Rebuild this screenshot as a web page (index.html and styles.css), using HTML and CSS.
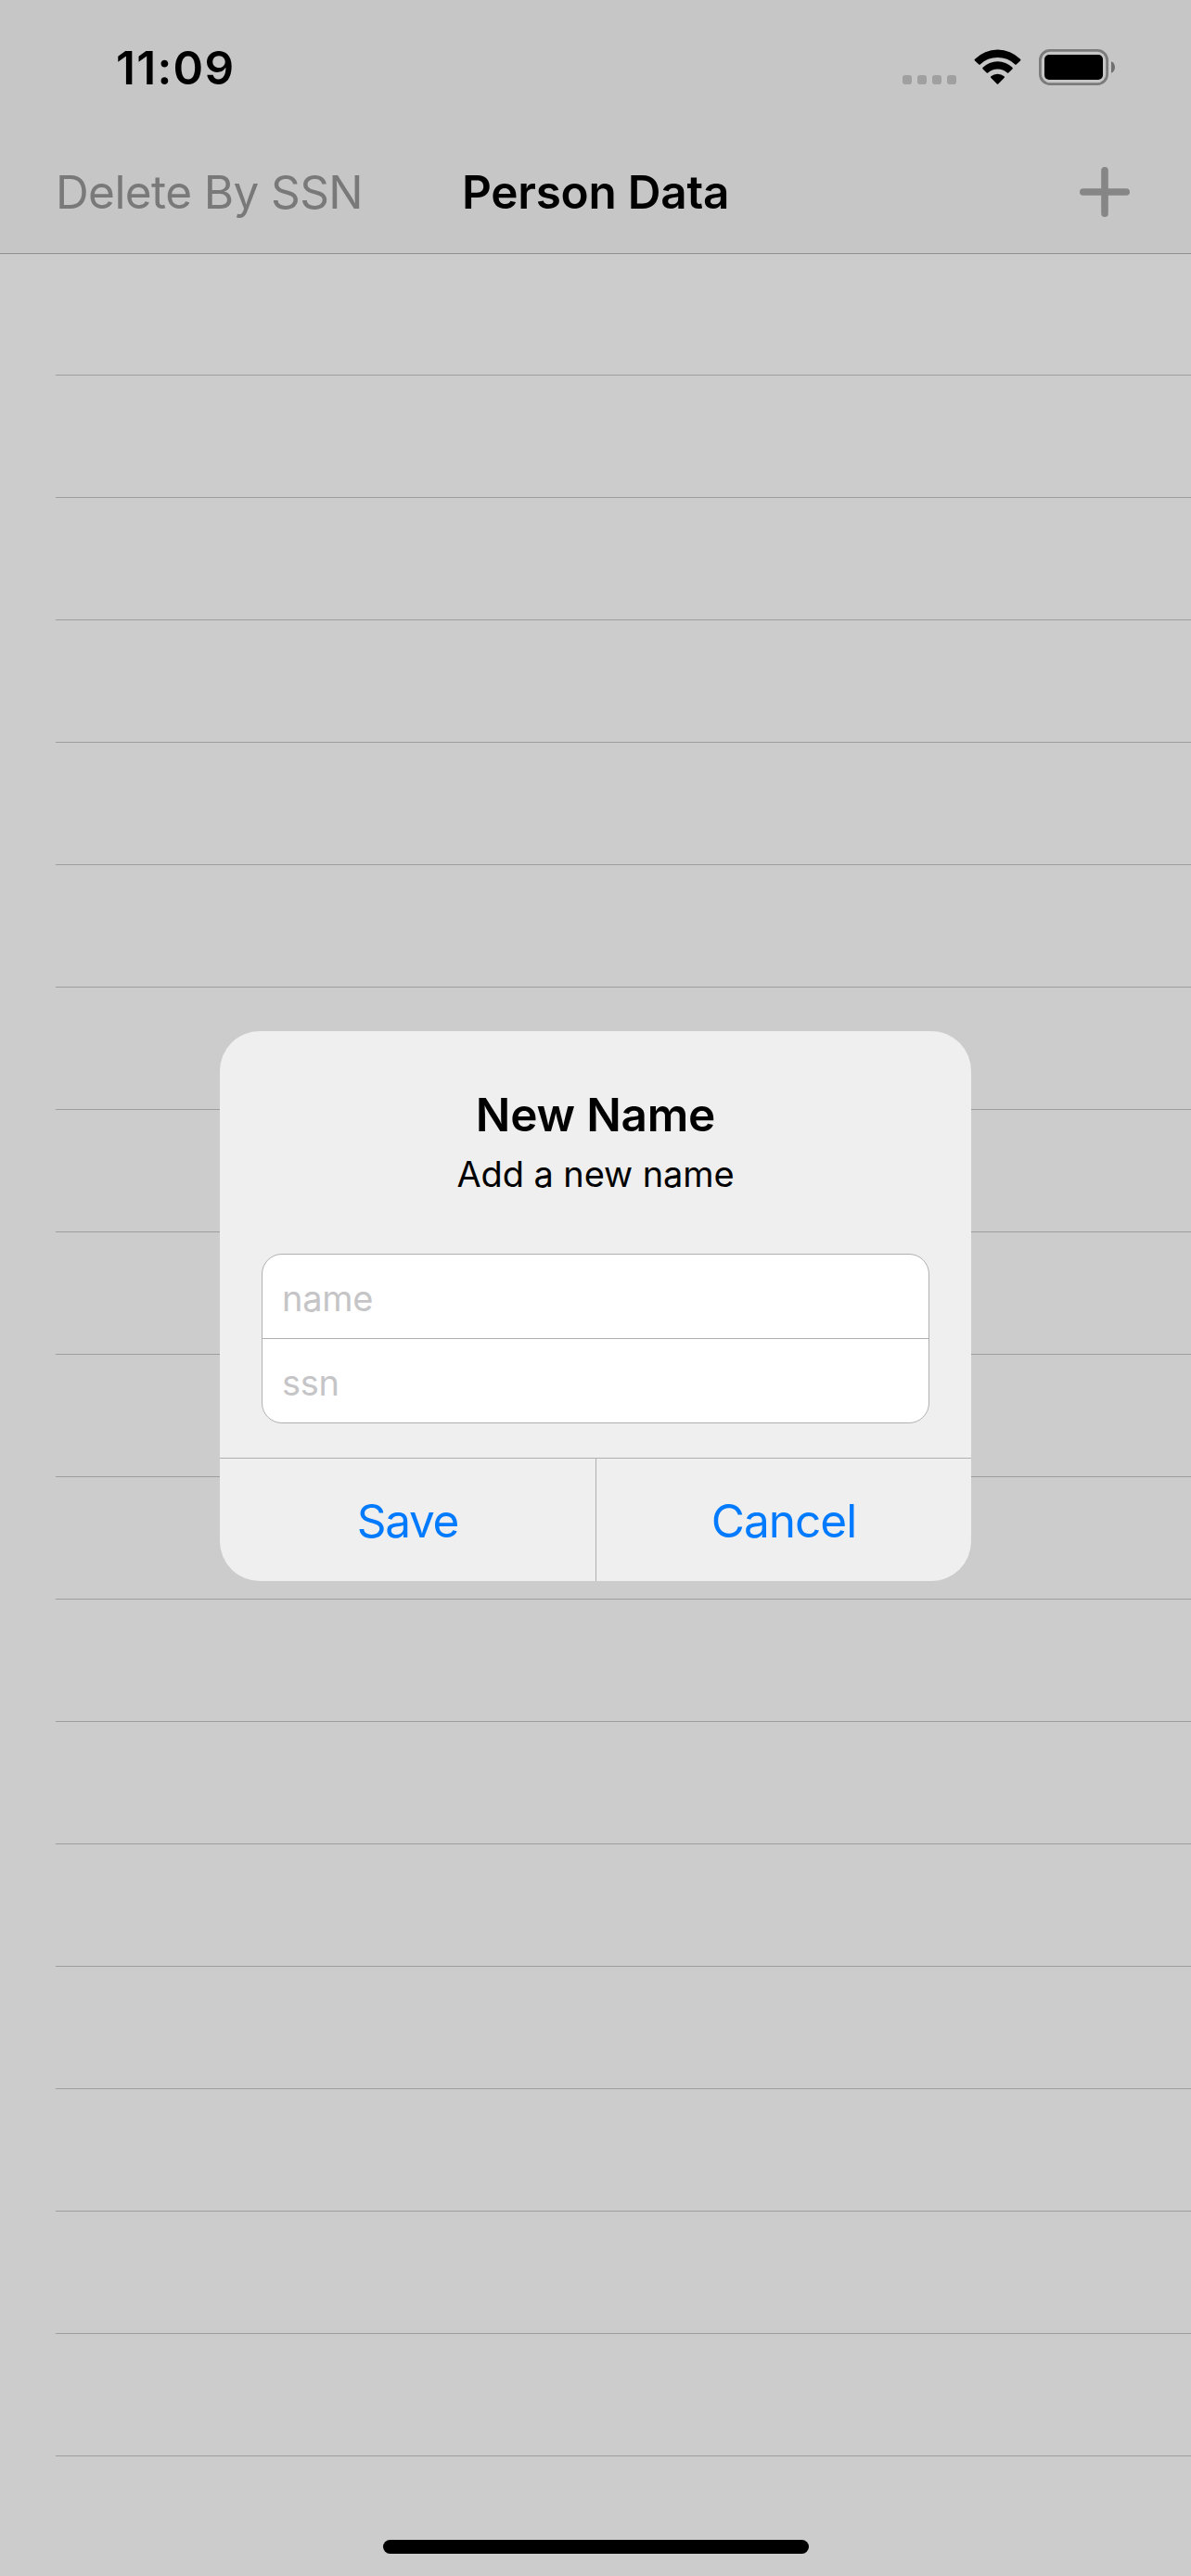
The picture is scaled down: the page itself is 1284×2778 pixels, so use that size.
FILE: index.html
```html
<!DOCTYPE html>
<html lang="en">
<head>
<meta charset="utf-8">
<title>Person Data</title>
<link rel="stylesheet" href="styles.css">
</head>
<body>
<div class="screen">
  <header class="header">
    <div class="status-bar">
      <time class="clock">11:09</time>
      <div class="status-icons">
        <svg class="signal" width="58" height="10" viewBox="0 0 58 10" aria-hidden="true">
          <rect width="10" height="10" rx="3"/>
          <rect x="16" width="10" height="10" rx="3"/>
          <rect x="32" width="10" height="10" rx="3"/>
          <rect x="48" width="10" height="10" rx="3"/>
        </svg>
        <svg class="wifi" width="51" height="39" viewBox="0 0 51 39" aria-hidden="true">
          <path d="M1 12.4Q.1 11.5 1 10.7A34.6 34.6 0 0 1 50 10.7Q50.900 11.500 50 12.400L45.700 16.500Q45 17.100 44.300 16.500A27 27 0 0 0 6.700 16.500Q6 17.100 5.300 16.500Z"/>
          <path d="M9.600 21.500Q8.700 20.600 9.600 19.800A22.600 22.600 0 0 1 41.400 19.800Q42.300 20.600 41.400 21.500L37.300 25.400Q36.600 26 35.900 25.400A15.600 15.600 0 0 0 15.100 25.400Q14.400 26 13.700 25.400Z"/>
          <path d="M18.400 31Q17.500 30.100 18.400 29.300A11 11 0 0 1 32.600 29.300Q33.500 30.100 32.600 31L26.200 37.500Q25.500 38.200 24.800 37.500Z"/>
        </svg>
        <svg class="battery" width="82" height="39" viewBox="0 0 82 39" aria-hidden="true">
          <rect class="battery-shell" x="1.400" y="1.400" width="72.200" height="36.200" rx="10.500"/>
          <rect x="6" y="6" width="63" height="27" rx="5"/>
          <path class="battery-tip" d="M78 13.300C80.600 14.400 82 16.800 82 19.500S80.600 24.600 78 25.700Z"/>
        </svg>
      </div>
    </div>
    <nav class="nav-bar">
      <span class="nav-action">Delete By SSN</span>
      <h1 class="nav-title">Person Data</h1>
      <svg class="nav-add" width="54" height="54" viewBox="0 0 54 54" role="img" aria-label="Add">
        <path d="M27 3.800V50.200M3.800 27H50.200"/>
      </svg>
    </nav>
  </header>

  <main class="rows">
    <div class="row"></div><div class="row"></div><div class="row"></div>
    <div class="row"></div><div class="row"></div><div class="row"></div>
    <div class="row"></div><div class="row"></div><div class="row"></div>
    <div class="row"></div><div class="row"></div><div class="row"></div>
    <div class="row"></div><div class="row"></div><div class="row"></div>
    <div class="row"></div><div class="row"></div><div class="row"></div>
  </main>

  <footer class="home-area"><div class="home-indicator"></div></footer>

  <div class="overlay">
    <section class="alert" role="dialog" aria-labelledby="alert-title">
      <div class="alert-body">
        <h2 class="alert-title" id="alert-title">New Name</h2>
        <p class="alert-message">Add a new name</p>
        <div class="fields">
          <div class="field" role="textbox">name</div>
          <div class="field" role="textbox">ssn</div>
        </div>
      </div>
      <div class="alert-actions">
        <button class="alert-button save">Save</button>
        <button class="alert-button cancel">Cancel</button>
      </div>
    </section>
  </div>
</div>
</body>
</html>
```
FILE: styles.css
```css
* {
  box-sizing: border-box;
}

body {
  margin: 0;
  font-family: Inter, "Liberation Sans", sans-serif;
  color: #000;
}

.screen {
  position: relative;
  display: flex;
  flex-direction: column;
  width: 1284px;
  height: 2778px;
  overflow: hidden;
  background: #ccc;
}

/* Status bar and navigation */
.header {
  flex: none;
  height: 274px;
  background: #c6c6c6;
  border-bottom: 1px solid #8e8e8e;
}

.status-bar {
  display: flex;
  justify-content: space-between;
  align-items: center;
  height: 141px;
  padding: 5px 82px 0 125px;
}

.clock {
  font-size: 49.5px;
  font-weight: 600;
  line-height: 60px;
  letter-spacing: 1.3px;
}

.status-icons {
  display: flex;
  align-items: flex-end;
  margin-bottom: 1px;
}

.signal {
  margin-bottom: 1px;
  fill: #a0a0a0;
}

.wifi {
  margin-left: 19px;
}

.battery {
  margin-left: 19px;
}

.battery-shell {
  fill: none;
  stroke: #7b7b7b;
  stroke-width: 2.8px;
}

.battery-tip {
  fill: #6f6f6f;
}

.nav-bar {
  display: grid;
  grid-template-columns: 1fr auto 1fr;
  align-items: center;
  height: 132px;
  padding: 0 66px 0 60px;
}

.nav-action {
  font-size: 49.5px;
  line-height: 60px;
  letter-spacing: -0.6px;
  color: #797979;
}

.nav-title {
  margin: 0 -6px 0 0;
  font-size: 49.5px;
  font-weight: 600;
  line-height: 60px;
  letter-spacing: -0.25px;
}

.nav-add {
  justify-self: end;
  fill: none;
  stroke: #868686;
  stroke-width: 7.6px;
  stroke-linecap: round;
}

/* Empty table */
.rows {
  flex: 1;
}

.row {
  height: 132px;
  margin-left: 60px;
  border-bottom: 1px solid #9e9e9e;
}

.row:first-child {
  height: 131px;
}

.home-area {
  display: flex;
  justify-content: center;
  padding: 0 0 24px 1px;
}

.home-indicator {
  width: 459px;
  height: 15px;
  border-radius: 8px;
  background: #000;
}

/* Alert */
.overlay {
  position: absolute;
  inset: 0;
  display: flex;
  justify-content: center;
  align-items: center;
  padding-top: 39px;
}

.alert {
  width: 810px;
  height: 593px;
  display: flex;
  flex-direction: column;
  overflow: hidden;
  border-radius: 43px;
  background: #efefef;
}

.alert-body {
  height: 460px;
  padding: 60px 45px 0;
  text-align: center;
}

.alert-title {
  margin: 0;
  font-size: 49.5px;
  font-weight: 600;
  line-height: 60px;
  letter-spacing: -0.2px;
}

.alert-message {
  margin: 10px 0 0;
  font-size: 38px;
  line-height: 48px;
  letter-spacing: -0.1px;
}

.fields {
  height: 183px;
  margin-top: 62px;
  overflow: hidden;
  border: 1px solid #b0b0b0;
  border-radius: 22px;
  background: #fff;
  text-align: left;
}

.field {
  height: 90px;
  padding: 2px 21px 0;
  font-size: 38px;
  line-height: 90px;
  letter-spacing: -0.3px;
  color: #c5c5c7;
}

.field + .field {
  height: 91px;
  border-top: 1px solid #b0b0b0;
}

.alert-actions {
  flex: 1;
  display: grid;
  grid-template-columns: 406px 1fr;
  border-top: 1px solid #b0b0b0;
}

.alert-button {
  padding: 2px 0 0;
  border: 0;
  background: none;
  font: 400 49.5px/60px Inter, "Liberation Sans", sans-serif;
  color: #007aff;
}

.save {
  border-right: 1px solid #b0b0b0;
  letter-spacing: -1.3px;
}

.cancel {
  letter-spacing: -0.95px;
}
```
